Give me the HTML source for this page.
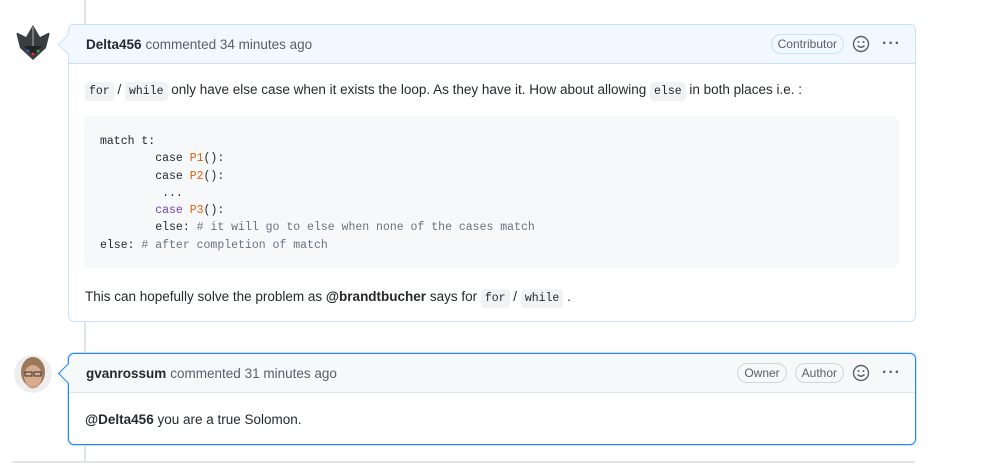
<!DOCTYPE html>
<html><head><style>
body{margin:0;width:984px;height:475px;background:#fff;font-family:"Liberation Sans",sans-serif;font-size:13.5px;color:#24292e;position:relative;overflow:hidden}
.line{position:absolute;left:84px;top:0;width:2px;height:462px;background:#e1e4e8}
.bottom{position:absolute;left:12px;top:461px;width:903px;height:2px;background:#e1e4e8}
.box{position:absolute;left:68px;width:846px;border:1px solid #c8e1ff;border-radius:6px;background:#fff}
.hdr{height:38px;border-bottom:1px solid #c8e1ff;background:#f1f8ff;border-radius:6px 6px 0 0;display:flex;align-items:center;padding:0 0 0 17px;color:#586069;position:relative}
.hdr b{color:#24292e;margin-right:4px}
.right{position:absolute;right:14px;top:0;height:38px;display:flex;align-items:center;gap:8px}
.badge{border:1px solid #c8e1ff;border-radius:12px;padding:1px 6px;font-size:12px;color:#586069;line-height:16px}
.dots{font-size:16px;letter-spacing:1px;color:#586069;font-weight:bold;margin-left:4px}
.arrow{position:absolute;left:-8px;top:12px;width:14px;height:14px;background:#f1f8ff;border-left:1px solid #c8e1ff;border-bottom:1px solid #c8e1ff;transform:rotate(45deg);}
code{font-family:"Liberation Mono",monospace;font-size:11.5px;background:#f1f2f4;padding:3px 4px;border-radius:4px}
pre{margin:0;position:absolute;left:15px;top:91px;width:815px;height:152px;background:#f6f8fa;border-radius:6px;font-family:"Liberation Mono",monospace;font-size:11.5px;line-height:17.3px;padding:17px 0 0 16px;box-sizing:border-box;color:#24292e}
.o{color:#e36209}.p{color:#6f42c1}.c{color:#6a737d}
.av{position:absolute;border-radius:50%}
</style></head><body>
<div class="line"></div>
<div class="bottom"></div>
<svg class="av" style="left:14px;top:24px" width="38" height="38" viewBox="0 0 38 38"><path d="M19 1 L26 13 L36 8 L32 24 L19 36 L6 24 L2 8 L12 13 Z" fill="#3b3d40"/><path d="M19 3 L19 30" stroke="#777" stroke-width="2"/><path d="M10 22 L19 32 L28 22" fill="#222"/><circle cx="14" cy="27" r="1.5" fill="#2a5cd6"/><circle cx="19" cy="30" r="1.5" fill="#d33"/><circle cx="24" cy="27" r="1.5" fill="#3a3"/></svg>
<div class="box" style="top:24px;height:296px">
<div class="arrow"></div>
<div class="hdr"><b>Delta456</b> commented 34 minutes ago
<div class="right"><span class="badge">Contributor</span><svg width="18" height="18" viewBox="0 0 18 18"><circle cx="9" cy="9" r="7.5" fill="none" stroke="#586069" stroke-width="1.4"/><circle cx="6.5" cy="7" r="1" fill="#586069"/><circle cx="11.5" cy="7" r="1" fill="#586069"/><path d="M5.5 10.5 Q9 14 12.5 10.5" fill="none" stroke="#586069" stroke-width="1.3"/></svg><span class="dots">···</span></div></div>
<div style="position:absolute;left:16px;top:57px"><code>for</code> / <code>while</code> only have else case when it exists the loop. As they have it. How about allowing <code>else</code> in both places i.e. :</div>
<pre>match t:
        case <span class="o">P1</span>():
        case <span class="o">P2</span>():
         ...
        <span class="p">case</span> <span class="o">P3</span>():
        else: <span class="c"># it will go to else when none of the cases match</span>
else: <span class="c"># after completion of match</span></pre>
<div style="position:absolute;left:16px;top:264px">This can hopefully solve the problem as <b>@brandtbucher</b> says for <code>for</code> / <code>while</code> .</div>
</div>
<svg class="av" style="left:14px;top:354px" width="38" height="40" viewBox="0 0 38 40"><defs><clipPath id="c"><circle cx="19" cy="20" r="19"/></clipPath></defs><g clip-path="url(#c)"><rect width="38" height="40" fill="#eee"/><ellipse cx="19" cy="18" rx="12" ry="15" fill="#9a7a5a"/><ellipse cx="19" cy="22" rx="9" ry="11" fill="#d9a98c"/><rect x="11" y="18" width="7" height="4" fill="none" stroke="#333" stroke-width="1"/><rect x="20" y="18" width="7" height="4" fill="none" stroke="#333" stroke-width="1"/><path d="M13 32 Q19 37 25 32" fill="#c9a08a"/></g></svg>
<div class="box" style="top:353px;height:90px;border:1px solid #2188ff;box-shadow:0 0 0 1px #c8e1ff">
<div class="arrow" style="background:#f6f8fa;border-color:#2188ff"></div>
<div class="hdr" style="background:#f6f8fa;border-bottom-color:#e1e4e8"><b>gvanrossum</b> commented 31 minutes ago
<div class="right"><span class="badge" style="border-color:#d1d5da">Owner</span><span class="badge" style="border-color:#d1d5da">Author</span><svg width="18" height="18" viewBox="0 0 18 18"><circle cx="9" cy="9" r="7.5" fill="none" stroke="#586069" stroke-width="1.4"/><circle cx="6.5" cy="7" r="1" fill="#586069"/><circle cx="11.5" cy="7" r="1" fill="#586069"/><path d="M5.5 10.5 Q9 14 12.5 10.5" fill="none" stroke="#586069" stroke-width="1.3"/></svg><span class="dots">···</span></div></div>
<div style="position:absolute;left:16px;top:58px"><b>@Delta456</b> you are a true Solomon.</div>
</div>
</body></html>
